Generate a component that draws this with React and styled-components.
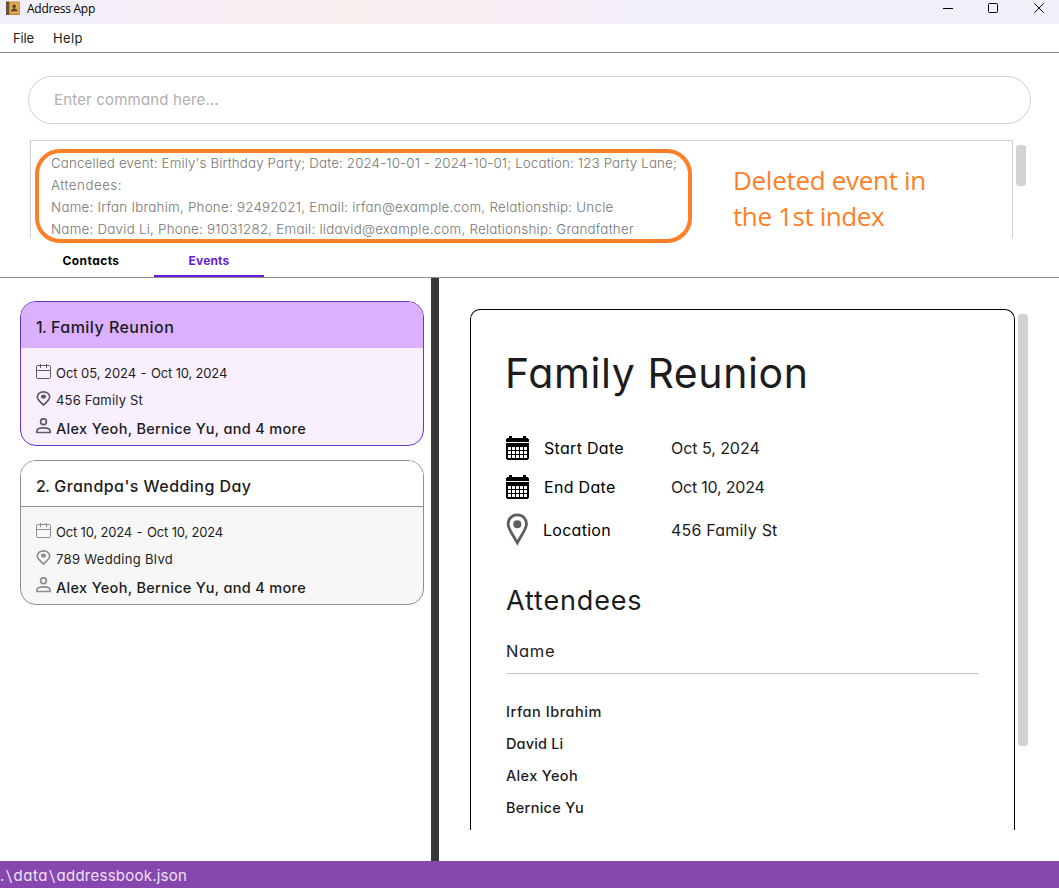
import React from 'react';
import styled, { createGlobalStyle } from 'styled-components';

const GlobalStyle = createGlobalStyle`
  * { box-sizing: border-box; }
  body {
    margin: 0;
    overflow: hidden;
    background: #fff;
    color: #1c1c1c;
    font-family: Inter, "Liberation Sans", sans-serif;
    font-feature-settings: "cv11";
  }
`;

/* Text with a per-use size, weight and tracking */
const Text = styled.span`
  white-space: nowrap;
  font-size: ${(p) => p.$size}px;
  font-weight: ${(p) => p.$weight || 400};
  letter-spacing: ${(p) => p.$track || 0}px;
  color: ${(p) => p.$color || 'inherit'};
`;

const Window = styled.div`
  position: relative;
  display: flex;
  flex-direction: column;
  width: 1059px;
  height: 888px;
  overflow: hidden;
  background: #fff;
`;

const TitleBar = styled.header`
  display: flex;
  align-items: flex-start;
  height: 24px;
  padding-left: 6px;
  background: linear-gradient(90deg, #f1f0f8 0, #f2eff8 80px, #f8eef6 190px, #faeeef 350px, #f9edf3 480px, #f2eff8 640px, #f2eff8 100%);
`;

const WindowTitle = styled.span`
  flex: 1;
  margin-left: 7px;
  font-family: "Open Sans", sans-serif;
  font-size: 12px;
  letter-spacing: -0.25px;
  line-height: 18px;
  color: #000;
`;

const WindowControls = styled.div`
  display: flex;
  gap: 34px;
  padding: 3px 14px 0 0;

  svg:last-child { margin-left: 1px; }
`;

const MenuBar = styled.nav`
  display: flex;
  gap: 19px;
  align-items: center;
  height: 29px;
  padding-left: 13px;
  border-bottom: 1px solid #858585;
`;

const CommandArea = styled.section`
  height: 87px;
  padding: 23px 28px 0;
`;

const CommandBox = styled.div`
  display: flex;
  align-items: center;
  height: 48px;
  padding: 0 25px 2px;
  border: 1px solid #d3d3d3;
  border-radius: 24px;
`;

const ResultArea = styled.section`
  display: flex;
  height: 98px;
  padding-left: 30px;
`;

const ResultBox = styled.div`
  width: 983px;
  padding: 10px 20px 0;
  border: 1px solid #cfcfcf;
  border-bottom: 0;
`;

const ResultLine = styled.div`
  height: 22px;
  line-height: 22px;
`;

const ScrollThumb = styled.div`
  width: 10px;
  height: ${(p) => p.$height}px;
  margin: 5px 0 0 3px;
  border-radius: 3px;
  background: #d3d3d3;
`;

const Highlight = styled.div`
  position: absolute;
  left: 35px;
  top: 149px;
  width: 657px;
  height: 94px;
  border: 4px solid #ff7f27;
  border-radius: 25px;
`;

const Note = styled.div`
  position: absolute;
  left: 733px;
  top: 162px;
  font-family: "Open Sans", sans-serif;
  font-size: 26px;
  line-height: 36px;
  color: #ff7f27;
`;

const Tabs = styled.div`
  display: flex;
  height: 40px;
  padding: 7px 0 0 28px;
  border-bottom: 1px solid #8c8c8c;
`;

const Tab = styled.div`
  display: flex;
  justify-content: center;
  width: ${(p) => p.$width}px;
  height: 32px;
  line-height: 32px;
  color: ${(p) => (p.$active ? '#6121d5' : '#000')};
  border-bottom: 2px solid ${(p) => (p.$active ? '#6121d5' : 'transparent')};
`;

const Main = styled.main`
  display: flex;
  flex: 1;
  min-height: 0;
`;

const EventList = styled.div`
  display: flex;
  flex-direction: column;
  gap: 14px;
  width: 431px;
  padding: 23px 7px 0 20px;
`;

const Divider = styled.div`
  width: 8px;
  background: #383838;
`;

const Card = styled.article`
  height: 145px;
  overflow: hidden;
  border: 1px solid ${(p) => (p.$selected ? '#6435cf' : '#8f8f8f')};
  border-radius: 16px;
  background: ${(p) => (p.$selected ? '#f8f0ff' : '#f7f7f7')};
  color: ${(p) => (p.$selected ? '#5f5b63' : '#8f8f8f')};
`;

const CardHeader = styled.header`
  display: flex;
  gap: 5px;
  align-items: center;
  height: 46px;
  padding: 4px 0 0 15px;
  color: #1c1c1c;
  background: ${(p) => (p.$selected ? '#dbb0ff' : '#fff')};
  border-bottom: 1px solid ${(p) => (p.$selected ? '#dbb0ff' : '#8f8f8f')};
`;

const CardBody = styled.div`
  display: flex;
  flex-direction: column;
  padding: 12px 0 0 15px;
`;

const CardRow = styled.div`
  display: flex;
  gap: ${(p) => p.$gap || 5}px;
  align-items: center;
  height: 27px;

  svg { margin: -3px ${(p) => 5 - (p.$gap || 5)}px 0 0; }
  span {
    margin-top: ${(p) => p.$shift}px;
    color: #1c1c1c;
  }
`;

const DetailArea = styled.section`
  display: flex;
  flex: 1;
  padding: 31px 0 31px 31px;
`;

const DetailPanel = styled.div`
  width: 545px;
  padding: 34px 35px 0;
  overflow: hidden;
  border: 1px solid #000;
  border-bottom: 0;
  border-radius: 10px 10px 0 0;
`;

const DetailTitle = styled.h1`
  margin: 0 0 22px -1px;
  font-weight: 400;
  line-height: 58px;
`;

const DetailRow = styled.div`
  display: grid;
  grid-template-columns: ${(p) => p.$label || 38}px 1fr;
  align-items: center;
  height: ${(p) => p.$height || 39}px;
`;

const DetailFields = styled.div`
  display: grid;
  grid-template-columns: ${(p) => p.$label}px 1fr;
  padding-top: ${(p) => p.$drop || 0}px;
`;

const SectionTitle = styled.h2`
  margin: 29px 0 0;
  font-weight: 400;
  line-height: 40px;
`;

const ColumnHeader = styled.div`
  height: 52px;
  padding-top: 17px;
  line-height: 24px;
  border-bottom: 1px solid #c8c8c8;
`;

const AttendeeList = styled.div`
  padding-top: 21px;
`;

const Attendee = styled.div`
  height: 32px;
  line-height: 32px;
`;

const StatusBar = styled.footer`
  height: 27px;
  line-height: 29px;
  color: #eee2f6;
  background: #8648af;
`;

const Slash = styled.span`
  display: inline-block;
  padding: 0 1.5px;
  font-size: 15px;
  font-weight: 300;
  transform: scaleX(1.3);
`;

const BookIcon = () => (
  <svg width="14" height="16" viewBox="0 -1 14 16">
    <rect y="0.5" width="14" height="13.5" rx="0.8" fill="#c98a38" />
    <rect y="0.5" width="3" height="13.5" fill="#6a5240" />
    <rect x="4" y="1.5" width="9.5" height="11" fill="#e0aa55" />
    <circle cx="8.2" cy="5.3" r="1.8" fill="#5b4028" />
    <path d="M7.4 6.5h1.6v1.6l2.3 .7v1.5H5V8.800l2.400-.7z" fill="#5b4028" />
  </svg>
);

const MinimizeIcon = () => (
  <svg width="11" height="11" viewBox="0 0 11 11"><path d="M0 5.500h10" stroke="#000" /></svg>
);
const MaximizeIcon = () => (
  <svg width="11" height="11" viewBox="0 0 11 11"><rect x=".5" y=".5" width="9" height="9" rx="1" fill="none" stroke="#000" /></svg>
);
const CloseIcon = () => (
  <svg width="11" height="11" viewBox="0 0 11 11"><path d="M.3 .3l9.500 9.500M9.800 .3L.3 9.800" stroke="#000" /></svg>
);

const CalendarIcon = () => (
  <svg width="15" height="16" viewBox="0 0 15 16" fill="none" stroke="currentColor">
    <rect x=".5" y="1.500" width="14" height="13" rx="1.300" />
    <path d="M.5 6.500h14M4.500 0v4M10.500 0v4" />
  </svg>
);
const PinIcon = () => (
  <svg width="15" height="16" viewBox="0 0 15 16">
    <path d="M7.500 .9c3.600 0 6.200 2.300 6.200 5.100 0 2.700-2.700 4.900-6.200 8-3.500-3.100-6.200-5.300-6.200-8 0-2.800 2.600-5.100 6.200-5.100z" fill="none" stroke="currentColor" strokeWidth="1.700" />
    <ellipse cx="7.500" cy="5.600" rx="2.600" ry="2.200" fill="currentColor" />
  </svg>
);
const PersonIcon = () => (
  <svg width="15" height="16" viewBox="0 0 15 16" fill="none" stroke="currentColor" strokeWidth="1.700">
    <circle cx="7.500" cy="3.700" r="2.900" />
    <path d="M.9 14.500v-1.400c0-1.800 2.700-3.200 6.600-3.200s6.600 1.400 6.600 3.200v1.400z" />
  </svg>
);

const SolidCalendarIcon = () => (
  <svg width="23" height="24" viewBox="0 0 23 24" shapeRendering="crispEdges">
    <rect x="3" y="0" width="3" height="3" fill="#000" />
    <rect x="17" y="0" width="3" height="3" fill="#000" />
    <path d="M1 2h21v1h1v3H0V3h1z" fill="#000" />
    <path d="M0 7h23v16h-1v1H1v-1H0z" fill="#000" />
    <path
      d="M2 11h3v3h-3zM6 11h3v3h-3zM10 11h3v3h-3zM14 11h3v3h-3zM18 11h3v3h-3zM2 15h3v3h-3zM6 15h3v3h-3zM10 15h3v3h-3zM14 15h3v3h-3zM18 15h3v3h-3zM2 19h3v3h-3zM6 19h3v3h-3zM10 19h3v3h-3zM14 19h3v3h-3zM18 19h3v3h-3z"
      fill="#fff"
    />
  </svg>
);
const LargePinIcon = () => (
  <svg width="23" height="33" viewBox="0 0 23 33">
    <path d="M11.300 1.900c5.300 0 9.200 4 9.200 9.200 0 4.800-4.900 11-9.200 18.700C7 22.100 2.100 15.900 2.100 11.100c0-5.200 3.900-9.200 9.200-9.200z" fill="none" stroke="#5e5e5e" strokeWidth="2.800" />
    <circle cx="11.300" cy="11.300" r="4" fill="#5e5e5e" />
  </svg>
);

const resultLines = [
  ["Cancelled event: Emily's Birthday Party; Date: 2024-10-01 - 2024-10-01; Location: 123 Party Lane;", 0.144],
  ['Attendees:', 0.5],
  ['Name: Irfan Ibrahim, Phone: 92492021, Email: irfan@example.com, Relationship: Uncle', 0.256],
  ['Name: David Li, Phone: 91031282, Email: lidavid@example.com, Relationship: Grandfather', 0.25],
];

const events = [
  {
    index: '1.', name: 'Family Reunion', nameTrack: 0.47, selected: true,
    start: 'Oct 05, 2024', startTrack: -0.05, end: 'Oct 10, 2024',
    place: '456 Family St', placeTrack: 0.2,
  },
  {
    index: '2.', name: "Grandpa's Wedding Day", nameTrack: 0.45, selected: false,
    start: 'Oct 10, 2024', startTrack: -0.17, end: 'Oct 10, 2024',
    place: '789 Wedding Blvd', placeTrack: 0.33,
  },
];

const attendees = [['Irfan Ibrahim', 0.54], ['David Li', 0.15], ['Alex Yeoh', 0.34], ['Bernice Yu', 0.28]];

function EventCard({ event }) {
  return (
    <Card $selected={event.selected}>
      <CardHeader $selected={event.selected}>
        <Text $size={16} $weight={500} $track={-0.75}>{event.index}</Text>
        <Text $size={16} $weight={500} $track={event.nameTrack}>{event.name}</Text>
      </CardHeader>
      <CardBody>
        <CardRow $gap={4.5} $shift={-1}>
          <CalendarIcon />
          <Text $size={13} $track={event.startTrack}>{event.start}</Text>
          <Text $size={13}>-</Text>
          <Text $size={13} $track={-0.17}>{event.end}</Text>
        </CardRow>
        <CardRow $shift={-1}>
          <PinIcon />
          <Text $size={13} $track={event.placeTrack}>{event.place}</Text>
        </CardRow>
        <CardRow $shift={2}>
          <PersonIcon />
          <Text $size={14.5} $weight={500} $track={0.31}>Alex Yeoh, Bernice Yu, and 4 more</Text>
        </CardRow>
      </CardBody>
    </Card>
  );
}

export default function App() {
  return (
    <Window>
      <GlobalStyle />
      <TitleBar>
        <BookIcon />
        <WindowTitle>Address App</WindowTitle>
        <WindowControls>
          <MinimizeIcon />
          <MaximizeIcon />
          <CloseIcon />
        </WindowControls>
      </TitleBar>
      <MenuBar>
        <Text $size={13} $track={-0.14}>File</Text>
        <Text $size={13} $track={0.41}>Help</Text>
      </MenuBar>
      <CommandArea>
        <CommandBox>
          <Text $size={15} $track={0.18} $color="#b0b0b0">Enter command here...</Text>
        </CommandBox>
      </CommandArea>
      <ResultArea>
        <ResultBox>
          {resultLines.map(([line, track]) => (
            <ResultLine key={line}>
              <Text $size={13.33} $weight={300} $track={track} $color="#757575">{line}</Text>
            </ResultLine>
          ))}
        </ResultBox>
        <ScrollThumb $height={41} />
      </ResultArea>
      <Tabs>
        <Tab $width={126}><Text $size={12} $weight={700} $track={0.42}>Contacts</Text></Tab>
        <Tab $width={110} $active><Text $size={12} $weight={700} $track={0.18}>Events</Text></Tab>
      </Tabs>
      <Main>
        <EventList>
          {events.map((event) => <EventCard key={event.index} event={event} />)}
        </EventList>
        <Divider />
        <DetailArea>
          <DetailPanel>
            <DetailTitle><Text $size={41} $track={0.6}>Family Reunion</Text></DetailTitle>
            <DetailRow>
              <SolidCalendarIcon />
              <DetailFields $label={127}>
                <Text $size={16} $track={0.31} $color="#000">Start Date</Text>
                <Text $size={16} $track={-0.05}>Oct 5, 2024</Text>
              </DetailFields>
            </DetailRow>
            <DetailRow>
              <SolidCalendarIcon />
              <DetailFields $label={127}>
                <Text $size={16} $track={0.3} $color="#000">End Date</Text>
                <Text $size={16} $track={-0.2}>Oct 10, 2024</Text>
              </DetailFields>
            </DetailRow>
            <DetailRow $label={37} $height={46}>
              <LargePinIcon />
              <DetailFields $label={128} $drop={2}>
                <Text $size={16} $track={0.28} $color="#000">Location</Text>
                <Text $size={16} $track={0.2}>456 Family St</Text>
              </DetailFields>
            </DetailRow>
            <SectionTitle><Text $size={27} $track={0.85}>Attendees</Text></SectionTitle>
            <ColumnHeader><Text $size={16.5} $track={0.65}>Name</Text></ColumnHeader>
            <AttendeeList>
              {attendees.map(([name, track]) => (
                <Attendee key={name}><Text $size={14.5} $weight={500} $track={track}>{name}</Text></Attendee>
              ))}
            </AttendeeList>
          </DetailPanel>
          <ScrollThumb $height={432} />
        </DetailArea>
      </Main>
      <StatusBar>
        <Text $size={15} $track={0.5}>.<Slash>\</Slash>data<Slash>\</Slash></Text>
        <Text $size={15} $track={0.24}>addressbook.json</Text>
      </StatusBar>
      <Highlight />
      <Note>
        <div><Text $size={26} $track={-0.3}>Deleted event in</Text></div>
        <div><Text $size={26} $track={-0.4}>the 1st index</Text></div>
      </Note>
    </Window>
  );
}
